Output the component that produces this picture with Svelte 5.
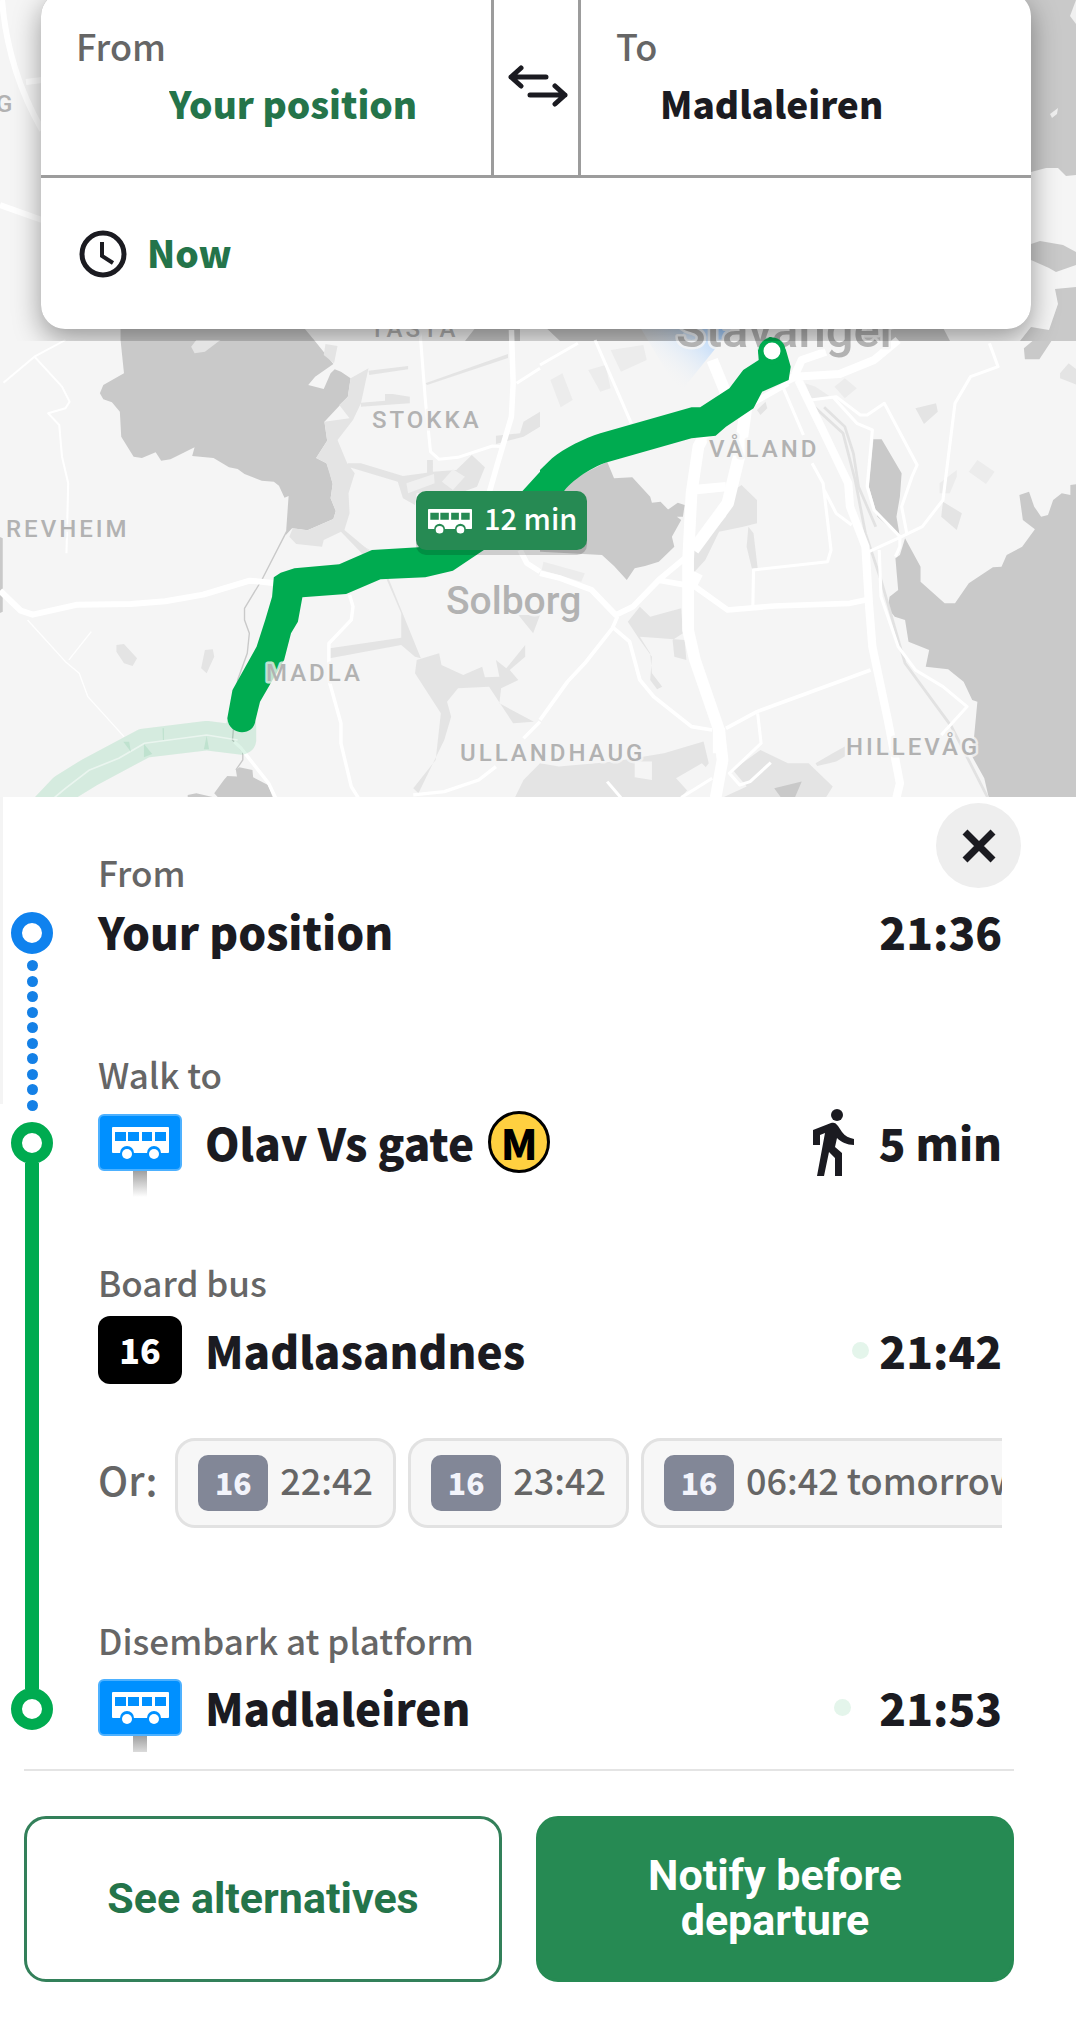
<script lang="ts">
	type Step = {
		kind: 'start' | 'walk' | 'board' | 'arrive';
		label: string;
		title: string;
		value: string;
		icon?: 'stop' | 'line';
		metro?: boolean;
		live?: boolean;
	};

	const steps: Step[] = [
		{ kind: 'start', label: 'From', title: 'Your position', value: '21:36' },
		{ kind: 'walk', label: 'Walk to', title: 'Olav Vs gate', value: '5 min', icon: 'stop', metro: true },
		{ kind: 'board', label: 'Board bus', title: 'Madlasandnes', value: '21:42', icon: 'line', live: true },
		{ kind: 'arrive', label: 'Disembark at platform', title: 'Madlaleiren', value: '21:53', icon: 'stop', live: true }
	];

	const line = '16';
	const departures = ['22:42', '23:42', '06:42 tomorrow'];
	const dots = Array.from({ length: 10 });

	const places = [
		{ name: 'STOKKA', x: 372, y: 428 },
		{ name: 'REVHEIM', x: 6, y: 537 },
		{ name: 'MADLA', x: 266, y: 681 },
		{ name: 'ULLANDHAUG', x: 460, y: 761 },
		{ name: 'VÅLAND', x: 709, y: 457 },
		{ name: 'HILLEVÅG', x: 846, y: 755 },
		{ name: 'TASTA', x: 370, y: 337 },
		{ name: 'G', x: -4, y: 112 }
	];

	let from = $state('Your position');
	let to = $state('Madlaleiren');

	function swap() {
		[from, to] = [to, from];
	}
</script>

{#snippet bus(width: number, x: number, y: number, ground: string)}
	<svg {x} {y} {width} height={(width * 32) / 57} viewBox="0 0 57 32" aria-hidden="true">
		<rect width="57" height="26" rx="1" fill="#fff" />
		<path d="M3 5h11v9H3zM16 5h11v9H16zM30 5h10v9H30zM43 5h11v9H43z" fill={ground} />
		<circle cx="15" cy="26" r="7" fill={ground} />
		<circle cx="42" cy="26" r="7" fill={ground} />
		<circle cx="15" cy="27" r="5" fill="#fff" />
		<circle cx="42" cy="27" r="5" fill="#fff" />
	</svg>
{/snippet}

<main class="page">
	<section class="top">
		<svg class="map" viewBox="0 0 1076 797" role="img" aria-label="Route map">
			<defs>
				<linearGradient id="beam" x1="1" y1="0" x2="0.2" y2="0.7">
					<stop offset="0" stop-color="#8fc3ff" />
					<stop offset="1" stop-color="#f5f5f5" stop-opacity="0" />
				</linearGradient>
			</defs>
			<rect width="1076" height="797" fill="#f5f5f5" />

			<!-- north -->
			<path d="M1010 0H1076V175L1066 176L1058 168L1046 168L1031 172H900V0Z" fill="#c9c9c9" />
			<path d="M1031 244L1040 241L1063 245L1076 252V265L1056 272L1049 268L1031 260Z" fill="#c9c9c9" />
			<path d="M1076 287L1055 289L1058 304L1049 330L1031 327L1020 341H1076Z" fill="#c9c9c9" />
			<path d="M1076 0L1070 16L1076 24ZM1058 108L1050 114L1052 118L1057 114Z" fill="#f0f0f0" />
			<path d="M540 322H688L680 341H560ZM870 322H940L950 341H862ZM465 341L480 322H520V341Z" fill="#c9c9c9" />
			<path d="M2 0C6 50 22 95 42 130M26 82L42 80M0 205L42 220" stroke="#fff" stroke-width="6" fill="none" />

			<!-- west -->
			<g transform="translate(0 340) scale(.3444 .3333)" stroke-linejoin="round">
				<path
					fill="#c9c9c9"
					d="M350-40V0L360 100L300 135L290 160L300 178L325 187L348 215L352 290L388 350L412 354L452 337L468 362L495 358L565 322L558 348L620 354L665 382L690 387L710 402L760 422L795 425L810 437L826 473L838 468L830 585L848 565L893 571L968 537L975 513L960 475L966 432L958 400L948 370L918 354L950 302L942 245L1010 170L1018 115L990 95L972 88L960 100L940 147L895 135L915 110L968 72L912 0L880-40Z"
				/>
				<path
					fill="#e4e4e4"
					d="M555 20L570 0H640L595 35L565 40ZM1070 85L1048 190L1025 240L980 300L1008 370L1030 400L1012 460L1015 520L1000 570L1035 600L1080 640L1060 650L990 575L940 600L935 620L860 612L840 590L850 565L893 571L968 537L975 513L960 475L966 432L948 370L918 354L950 302L942 245L1015 235L985 195L1010 170L1018 115ZM1170 408L1240 398L1240 360H1257V395L1325 390L1370 345L1408 382L1385 440L1345 455L1210 460L1205 495L1170 475L1155 425L1010 380V370L1048 370ZM1070 92L1185 78V88L1072 105ZM1048 188L1118 182V162H1140L1190 170V190L1048 200ZM1235 130L1475 42V54L1240 135ZM1440 287L1510 280L1520 245L1568 215V260L1520 290L1440 312ZM945 12L980 18L970 70L940 45Z"
				/>
				<path
					fill="#e4e4e4"
					d="M1040 610L1100 650L1130 720L1222 955L1205 950L1165 915L958 955V925L1165 893V820L1090 640ZM1210 960L1275 940L1282 975L1345 1005L1400 980L1408 1012L1450 1010L1440 960L1470 985L1525 915V950L1480 990L1505 1020L1455 1045L1450 1090L1550 1145L1490 1150L1420 1040L1330 1045L1298 1085L1310 1130L1290 1200L1215 1360L1200 1345L1265 1260L1280 1120L1205 1000ZM1568 1270L1520 1320L1495 1373H1568ZM338 915L360 912L398 955L385 978L360 970L338 935ZM595 930L618 928L622 950L600 1000L584 985ZM1505 825H1568L1548 880Z"
				/>
				<path fill="#f0f0f0" d="M1180 430L1260 402L1262 430L1185 460ZM1283 425L1315 388L1350 410L1315 450Z" />
				<path
					fill="#c9c9c9"
					d="M685 1290L695 1282L733 1290L735 1312L778 1335L795 1380H640L622 1360L650 1320L660 1308L688 1310ZM545 1365L570 1360L625 1373H545ZM-2 590L8 595V815L-2 820Z"
				/>
				<g fill="none" stroke="#c9c9c9" stroke-width="4">
					<path d="M832 575L760 720L710 805V840L724 880L718 940L690 1020L675 1200L705 1235V1260L685 1290" />
				</g>
				<g fill="none" stroke="#fff">
					<path stroke-width="18" d="M0 752L60 812L95 824L225 794L380 792L480 784L590 764L725 722L820 732" />
					<path stroke-width="6" d="M10 128L100 50L190 0M100 50L180 140L202 185L190 205L140 220L172 255L180 350L198 430L193 640" />
					<path stroke-width="4" d="M80 840L190 965L230 1000L255 1070L360 1190M200 960L265 875" />
					<path stroke-width="9" d="M1220-20L1235 180L1250 335L1275 358L1330 352L1430 318L1465 320M1500 130L1568 85" />
					<path stroke-width="16" d="M1485-30L1490 130L1485 230L1445 370L1420 460M1510 630L1530 670L1568 695" />
					<path stroke-width="10" d="M1015 765L1025 800L1020 840L955 910V1020L990 1150V1210L1020 1340L1040 1373M680 1205L700 1225L780 1330L800 1373M1200 1365L1290 1355L1390 1320L1440 1280M1520 1195L1568 1145" />
				</g>
				<path d="M135 1400L185 1345L260 1297L418 1210L600 1187L700 1200V1160" fill="none" stroke="#00a84f" stroke-opacity=".13" stroke-width="88" stroke-linejoin="round" stroke-linecap="round" />
				<path d="M150 1380L190 1345L260 1290L345 1255L420 1210L600 1185L690 1200" fill="none" stroke="#fff" stroke-opacity=".5" stroke-width="5" />
				<path d="M358 1205L380 1235L375 1205ZM418 1212L442 1242L418 1252ZM592 1228L600 1187L607 1228ZM472 1165H476V1200H473Z" fill="#bfe2cf" />
				<path
					fill="#00ab50"
					d="M660 1135L675 1050L745 920L770 840L790 770L795 712L815 698L855 685L985 673L1080 630L1215 622L1515 455L1568 395H1640V470L1405 630L1315 692L1235 712L1105 718L1005 762L878 772L865 845L845 880L825 960L755 1085L742 1140C738 1190 665 1190 660 1135Z"
				/>
			</g>

			<!-- east -->
			<g transform="translate(540 320) scale(.3444 .3333)" stroke-linejoin="round">
				<path
					fill="#e4e4e4"
					d="M550 520L585 495L630 540V610L590 620L520 635L480 720L445 760L440 700L540 590ZM290 860L320 890L410 865L415 940L385 960L390 1010L425 1020L420 960L290 950L320 1000L325 1060L355 1100L340 1108L320 1080L325 1010L290 960L255 905ZM0 1330L55 1340L215 1325L360 1300L475 1265L490 1330L410 1433H0ZM560 1350L640 1290L720 1330L780 1330L850 1400L830 1433H530L600 1400ZM1090 265L1150 250L1155 275L1115 312ZM1170 545L1225 580L1210 630L1165 590ZM605 620L620 640L632 745H615L600 680ZM800 1330L850 1300L885 1280V1310L860 1325L805 1338ZM1510 160L1535 130L1560 150V195L1510 175ZM630 270L655 245L660 265L640 285Z"
				/>
				<path fill="#f5f5f5" d="M275 1325H325V1380L275 1372ZM395 1375L470 1330L490 1350L430 1415Z" />
				<path fill="#ececec" d="M1270 420L1320 455L1295 492L1245 455ZM855 200L885 175L920 205L885 235ZM30 180L65 160L95 240L60 262ZM140 150L190 135L205 205L175 215ZM205 90L300 75L310 120L235 155ZM10 725L130 760L120 785L5 750ZM1160 490L1210 450V470L1190 520L1160 520ZM770 190L800 200L850 235L790 240Z" />
				<path
					fill="#c9c9c9"
					d="M195 425L215 475L268 472L320 530L325 548L350 545L378 575L410 600L383 650L390 680L345 725L305 738L275 745L252 780L215 738L180 705L0 695V500H60L90 480ZM968 358H992L1050 460L1045 530L1035 590L1045 650L980 590L955 500ZM1560 492L1540 495V525L1515 520L1490 540L1475 585L1455 590L1435 560L1420 515L1392 525L1402 600L1437 628L1400 680L1355 705L1340 740L1315 742L1245 790L1205 850H1175L1105 785V740L1060 655L1045 705L1032 715L1040 810L1015 830L1010 865L1030 890L1060 900L1070 965L1130 990L1120 1040L1185 1048L1230 1085L1255 1140L1270 1145L1255 1310L1290 1375L1303 1433H1560ZM1408 118L1405 85L1430 63H1485L1450 118ZM370 570L400 548L420 555L415 590L395 590ZM680 1405L760 1385L740 1433H700Z"
				/>
				<path d="M785 250L880 340L915 480L945 640L990 780L1060 1030L1195 1220L1300 1433" fill="none" stroke="#e2e2e2" stroke-width="8" />
				<path d="M825 262L885 320L910 400L925 500L975 620" fill="none" stroke="#e2e2e2" stroke-width="8" />
				<path d="M290 20H560L405 220Z" fill="url(#beam)" />
				<g fill="none" stroke="#fff">
					<path stroke-width="34" d="M500 120L540 220L460 380L440 520L430 720V930L450 1020L520 1230L530 1320L510 1433" />
					<path stroke-width="36" d="M600 250L580 400L545 550L445 690M520 1225V1300" />
					<path stroke-width="28" d="M440 510L540 500M460 760L440 800" />
					<path stroke-width="24" d="M750 180L830 350L895 490L900 560L945 680L955 850L965 980L1010 1200L1045 1390L1035 1433M700 190L740 170L870 162L970 120L1040 60M740 165L760 120L830 95" />
					<path stroke-width="17" d="M0 760L60 775L150 810L220 885L270 860L350 775L420 715M340 780L450 800L545 870L680 858L900 850L945 840M600 260L720 190" />
					<path stroke-width="11" d="M225 890L210 925L130 1030L80 1085L0 1200M540 1225L630 1175L960 1050M215 925L260 965L290 1080L330 1130L440 1220L500 1230" />
					<path stroke-width="9" d="M632 1180L642 1270L550 1360L580 1395L610 1385L670 1328M410 1433L500 1375M195 1385L235 1433M785 240L860 230L930 285H950L1000 250L1095 435L1080 470L1050 560L1065 640M850 230L920 310L965 330L950 500L970 570L1045 650V680L1032 710M955 695L1050 650L1110 620L1170 540L1205 250L1250 170L1330 140L1305 70" />
					<path stroke-width="9" d="M985 690L990 830L1040 980L1090 1050L1170 1100L1240 1160L1165 1245M790 430L822 490L845 690L835 725L620 750L618 860M825 510L860 580L905 615M705 200L765 345M160 60L265 310M0 135L110 70" />
				</g>
				<path
					fill="#00ab50"
					d="M0 450L35 415C70 385 130 355 175 340L440 262H465L550 205L590 150L635 120L632 80C640 40 700 45 710 75L728 140L722 180L645 215L620 265L540 320L510 347L440 355L200 425C160 435 90 480 65 520L0 560Z"
				/>
			</g>

			<g class="place-names">
				{#each places as place}
					<text x={place.x} y={place.y}>{place.name}</text>
				{/each}
			</g>
			<text class="town" x="446" y="614">Solborg</text>
			<text class="city" x="676" y="347">Stavanger</text>

			<circle cx="772" cy="351" r="11" fill="#fff" stroke="#00ab50" stroke-width="5" />

			<rect x="416" y="497" width="171" height="58" rx="10" fill="#000" opacity=".16" />
			<rect x="416" y="491" width="171" height="59" rx="10" fill="#268a53" />
			{@render bus(44, 428, 509, '#268a53')}
			<text class="duration" x="484" y="530">12 min</text>
		</svg>

		<header class="search">
			<div class="search-card">
				<div class="row">
					<div class="field">
						<label for="from">From</label>
						<input id="from" class="current" type="text" bind:value={from} />
					</div>
					<button class="swap" type="button" aria-label="Swap from and to" onclick={swap}>
						<svg width="60" height="42" viewBox="0 0 60 42" aria-hidden="true">
							<path d="M38 12H3M13 3L3 12L13 21M22 30H57M47 21L57 30L47 39" />
						</svg>
					</button>
					<div class="field">
						<label for="to">To</label>
						<input id="to" type="text" bind:value={to} />
					</div>
				</div>
				<button class="when" type="button">
					<svg width="48" height="48" viewBox="0 0 48 48" aria-hidden="true">
						<circle cx="24" cy="24" r="21" />
						<path d="M23 12V26L34 33" stroke-width="4" />
					</svg>
					<span>Now</span>
				</button>
			</div>
		</header>
	</section>

	<section class="sheet">
		<div class="sheet-head">
			<button class="close" type="button" aria-label="Close">
				<svg width="34" height="34" viewBox="0 0 34 34" aria-hidden="true">
					<path d="M3 3L31 31M31 3L3 31" />
				</svg>
			</button>
		</div>

		<ol class="steps">
			{#each steps as step}
				<li class="step {step.kind}">
					<div class="rail">
						{#if step.kind === 'start'}
							<span class="node"></span>
							<span class="dots">
								{#each dots as _}<i></i>{/each}
							</span>
						{:else if step.kind === 'walk'}
							<span class="node"></span>
							<span class="track"></span>
						{:else if step.kind === 'board'}
							<span class="track"></span>
						{:else}
							<span class="track lead"></span>
							<span class="node"></span>
						{/if}
					</div>
					<div class="body">
						<div class="step-label">{step.label}</div>
						<div class="step-row">
							{#if step.icon === 'stop'}
								<svg class="sign" width="84" height="56" viewBox="0 0 84 56" aria-hidden="true">
									<defs>
										<linearGradient id="post-{step.kind}" x1="0" y1="0" x2="0" y2="1">
											<stop offset="0" stop-color="#999" />
											<stop offset="1" stop-color="#fff" />
										</linearGradient>
									</defs>
									<rect x="35" y="55" width="14" height="28" fill="url(#post-{step.kind})" />
									<rect x="1" y="1" width="82" height="55" rx="5" fill="#0090ff" stroke="#4db1ff" stroke-width="2" />
									{@render bus(57, 14, 13, '#0090ff')}
								</svg>
							{:else if step.icon === 'line'}
								<span class="line-badge">{line}</span>
							{/if}
							<span class="title">{step.title}</span>
							{#if step.metro}<span class="metro">M</span>{/if}
							<span class="value">
								{#if step.kind === 'walk'}
									<svg width="42" height="67" viewBox="0 0 42 67" aria-hidden="true">
										<circle cx="24" cy="6" r="6" />
										<path d="M0 21L18 14C21 13 23 14 25 17L29 23C32 27 36 29 41 30V36C34 36 28 33 24 29L22 38L29 44V67H22V49L16 43L11 67H4L12 24L7 26V36H0Z" />
									</svg>
								{/if}
								{#if step.live}<span class="live"></span>{/if}
								{step.value}
							</span>
						</div>
						{#if step.kind === 'board'}
							<div class="others">
								<span class="or">Or:</span>
								{#each departures as departure}
									<button class="chip" type="button">
										<span class="chip-line">{line}</span>
										<span class="chip-time">{departure}</span>
									</button>
								{/each}
							</div>
						{/if}
					</div>
				</li>
			{/each}
		</ol>

		<footer class="actions">
			<button class="action" type="button">See alternatives</button>
			<button class="action primary" type="button">Notify before departure</button>
		</footer>
	</section>
</main>

<style>
	:global(body) {
		margin: 0;
		background: #fff;
	}

	.page {
		padding-right: 4px;
		font-family: 'Noto Sans CJK JP', 'Noto Sans', sans-serif;
		color: #1b1b21;
		overflow: hidden;
	}

	button,
	input {
		font: inherit;
		color: inherit;
		border: none;
		margin: 0;
		padding: 0;
		background: none;
	}

	button {
		cursor: pointer;
	}

	.top {
		display: grid;
	}

	.map,
	.search {
		grid-area: 1 / 1;
	}

	.map {
		display: block;
		width: 100%;
		height: auto;
	}

	.place-names,
	.town,
	.city {
		font-family: Roboto, sans-serif;
		font-weight: 500;
		fill: #b2b2b2;
		stroke: #f5f5f5;
		stroke-width: 5px;
		stroke-opacity: 0.8;
		stroke-linejoin: round;
		paint-order: stroke;
	}

	.place-names {
		font-size: 24px;
		letter-spacing: 3px;
	}

	.town {
		font-size: 39px;
	}

	.city {
		font-size: 49px;
	}

	.duration {
		font-size: 29px;
		font-weight: 500;
		fill: #fff;
	}

	.search {
		align-self: start;
		padding: 0 45px 12px 41px;
		overflow: hidden;
	}

	.search-card {
		display: flex;
		flex-direction: column;
		gap: 3px;
		margin-top: -8px;
		border-radius: 24px;
		background: #9c9c9c;
		box-shadow: 0 10px 28px rgba(0, 0, 0, 0.38);
		overflow: hidden;
	}

	.row {
		display: flex;
		gap: 3px;
	}

	.field {
		flex: 1;
		min-width: 0;
		padding: 29px 35px 44px;
		background: #fff;
	}

	.field label {
		display: block;
		font-size: 36px;
		font-weight: 500;
		line-height: 48px;
		color: #666;
	}

	.field input {
		display: block;
		box-sizing: border-box;
		width: 100%;
		height: 56px;
		margin-top: 6px;
		padding-left: 44px;
		font-size: 37px;
		font-weight: 900;
	}

	.field input.current {
		padding-left: 93px;
		color: #24744a;
	}

	.swap {
		display: grid;
		place-items: center;
		width: 84px;
		padding: 4px 0 0 4px;
		background: #fff;
	}

	.swap svg {
		fill: none;
		stroke: #1b1b21;
		stroke-width: 5;
		stroke-linecap: round;
		stroke-linejoin: round;
	}

	.when {
		display: flex;
		align-items: center;
		gap: 20px;
		height: 151px;
		padding-left: 38px;
		background: #fff;
		color: #24744a;
		font-size: 37px;
		font-weight: 900;
	}

	.when span {
		padding-bottom: 4px;
	}

	.when svg {
		fill: none;
		stroke: #1b1b21;
		stroke-width: 5;
	}

	.sheet {
		background: linear-gradient(#f4f4f4, #f4f4f4) no-repeat 0 0 / 3px 307px #fff;
	}

	.sheet-head {
		position: relative;
		z-index: 1;
		width: fit-content;
		padding: 6px 55px 0 0;
		margin: 0 0 -46px auto;
	}

	.close {
		display: grid;
		place-items: center;
		width: 85px;
		height: 85px;
		border-radius: 50%;
		background: #eee;
	}

	.close svg {
		fill: none;
		stroke: #1b1b21;
		stroke-width: 7;
	}

	.steps {
		list-style: none;
		margin: 0;
		padding: 6px 74px 0 0;
		overflow: hidden;
	}

	.step {
		display: grid;
		grid-template-columns: 64px minmax(0, 1fr);
		column-gap: 34px;
	}

	.body {
		padding-bottom: 72px;
	}

	.start .body {
		padding-bottom: 84px;
	}

	.board .body {
		padding-bottom: 88px;
	}

	.arrive .body {
		padding-bottom: 2px;
	}

	.rail {
		display: flex;
		flex-direction: column;
		align-items: center;
	}

	.start .rail {
		padding-top: 64px;
		margin-bottom: -72px;
	}

	.walk .rail {
		padding-top: 72px;
	}

	.node {
		flex: none;
		box-sizing: border-box;
		width: 42px;
		height: 42px;
		border: 11px solid #00ab50;
		border-radius: 50%;
		background: #fff;
	}

	.start .node {
		border-color: #0f82ee;
	}

	.dots {
		flex: 1;
		display: flex;
		flex-direction: column;
		justify-content: space-between;
		padding: 6px 0 11px;
	}

	.dots i {
		width: 11px;
		height: 11px;
		border-radius: 50%;
		background: #1480e6;
	}

	.track {
		flex: 1;
		width: 14px;
		margin: -1px 0;
		background: #00ab50;
	}

	.track.lead {
		flex: none;
		height: 74px;
	}

	.step-label {
		font-size: 35px;
		font-weight: 500;
		line-height: 48px;
		color: #666;
	}

	.step-row {
		display: flex;
		align-items: center;
		height: 88px;
		font-size: 44px;
		font-weight: 900;
		white-space: nowrap;
	}

	.start .step-row {
		height: 70px;
	}

	.arrive .step-row {
		height: 86px;
	}

	.sign {
		overflow: visible;
	}

	.sign,
	.line-badge {
		flex: none;
		margin-right: 23px;
	}

	.line-badge {
		display: grid;
		place-items: center;
		width: 84px;
		height: 68px;
		border-radius: 12px;
		background: #000;
		color: #fff;
		font-size: 34px;
		line-height: 48px;
	}

	.metro {
		display: grid;
		place-items: center;
		box-sizing: border-box;
		width: 62px;
		height: 62px;
		margin-left: 14px;
		border: 3px solid #000;
		border-radius: 50%;
		background: #ffd040;
		color: #000;
		font-size: 42px;
		line-height: 48px;
	}

	.value {
		display: flex;
		align-items: center;
		margin-left: auto;
	}

	.value svg {
		margin-right: 24px;
		fill: #1b1b21;
	}

	.live {
		width: 17px;
		height: 17px;
		margin-right: 10px;
		border-radius: 50%;
		background: #e4f5eb;
	}

	.arrive .live {
		margin-right: 28px;
	}

	.others {
		display: flex;
		align-items: center;
		gap: 12px;
		margin-top: 44px;
		overflow: hidden;
		color: #666;
		font-weight: 500;
		white-space: nowrap;
	}

	.or {
		margin-right: 6px;
		padding-bottom: 8px;
		font-size: 40px;
		line-height: 48px;
	}

	.chip {
		flex: none;
		display: flex;
		align-items: center;
		gap: 12px;
		box-sizing: border-box;
		height: 90px;
		padding: 0 20px;
		border: 3px solid #e2e2e2;
		border-radius: 20px;
		background: #f7f7f7;
		font-size: 36px;
	}

	.chip-line {
		display: grid;
		place-items: center;
		box-sizing: border-box;
		width: 70px;
		height: 56px;
		padding-bottom: 2px;
		border-radius: 10px;
		background: #828797;
		color: #f3f4fb;
		font-size: 30px;
		font-weight: 900;
		line-height: 48px;
	}

	.chip-time {
		padding-bottom: 8px;
		line-height: 48px;
	}

	.actions {
		display: flex;
		gap: 34px;
		margin: 17px 62px 0 24px;
		padding: 45px 0 36px;
		border-top: 2px solid #e4e4e4;
	}

	.action {
		flex: 1 1 0;
		box-sizing: border-box;
		height: 166px;
		padding: 0 68px 2px;
		border: 3px solid #33805a;
		border-radius: 22px;
		background: #fff;
		color: #24744a;
		font-family: Roboto, sans-serif;
		font-size: 43px;
		font-weight: 700;
		line-height: 45px;
	}

	.action.primary {
		border-color: #268a53;
		background: #268a53;
		color: #fff;
	}
</style>
